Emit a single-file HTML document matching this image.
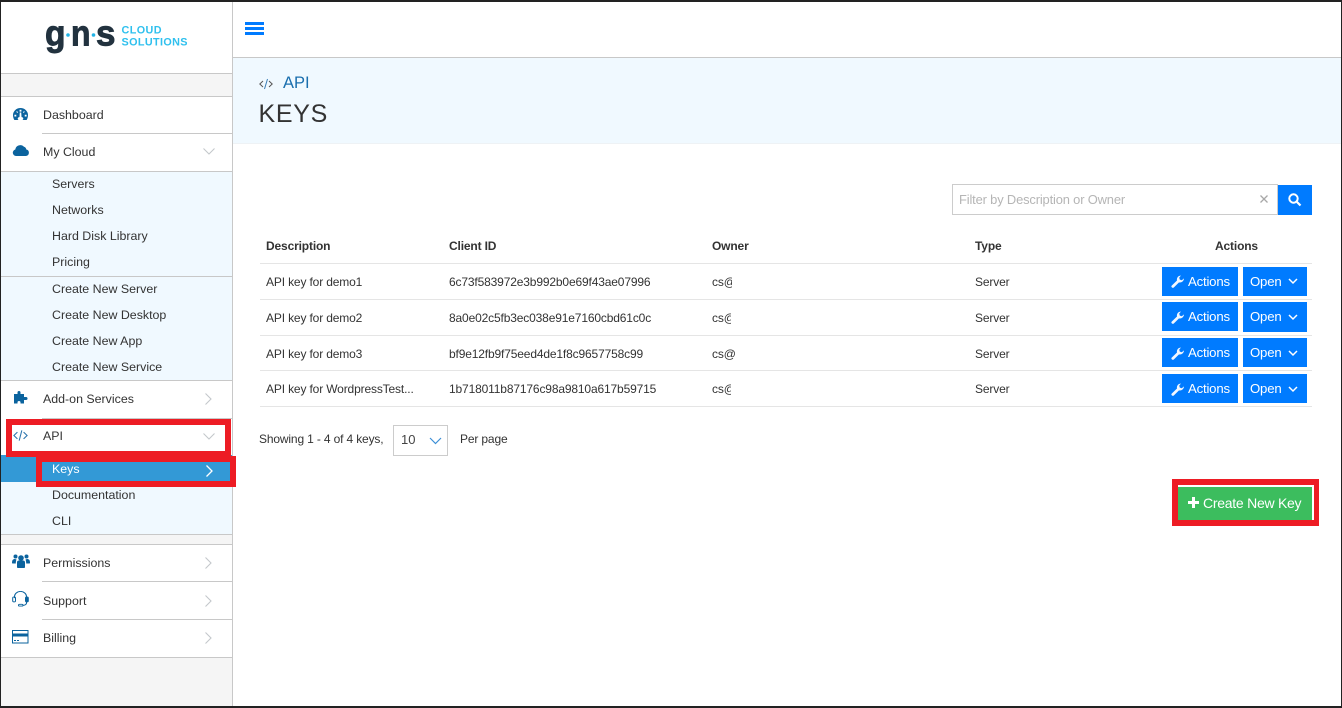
<!DOCTYPE html>
<html lang="en"><head><meta charset="utf-8"><title>API Keys</title>
<style>
html,body{margin:0;padding:0;width:1342px;height:708px;overflow:hidden;background:#fff;font-family:"Liberation Sans",Arial,sans-serif;color:#333}
div,span,svg{position:absolute;display:block}
.t{white-space:nowrap;font-size:12px;line-height:14px;letter-spacing:-.15px}
.s{white-space:nowrap;font-size:12.4px;line-height:16px;color:#333;margin-top:1px}
.l{background:#c8c8c8;height:1px}
.r{background:#e5e5e5;height:1px;left:260px;width:1052px}
.b{background:#007bff;color:#fff;font-size:13.2px;line-height:29px;white-space:nowrap;letter-spacing:-.2px}
.red{border:6px solid #ed1c24;box-sizing:border-box}
</style></head><body>
<div style="left:0;top:0;width:233px;height:708px;background:#fff"></div>
<div style="left:1px;top:74px;width:231px;height:22px;background:#f5f5f5"></div>
<div style="left:1px;top:535px;width:231px;height:9px;background:#f5f5f5"></div>
<div style="left:1px;top:658px;width:231px;height:48px;background:#f5f5f5"></div>
<div style="left:1px;top:172px;width:231px;height:208px;background:#f0f9ff"></div>
<div style="left:1px;top:457px;width:231px;height:77px;background:#f0f9ff"></div>
<div style="left:232px;top:0;width:1px;height:708px;background:#c8c8c8"></div>

<svg style="left:40px;top:20px" width="155" height="38" viewBox="0 0 155 38">
<g font-family="Liberation Sans" font-weight="700" font-size="36" fill="#22323f" stroke="#22323f" stroke-width=".9">
<text x="5" y="25.500" textLength="20.500" lengthAdjust="spacingAndGlyphs">g</text>
<text x="31" y="25.500" textLength="19.500" lengthAdjust="spacingAndGlyphs">n</text>
<text x="56" y="25.500" textLength="19.500" lengthAdjust="spacingAndGlyphs">s</text>
</g>
<circle cx="28" cy="15" r="1.800" fill="#22b3e6"/>
<circle cx="53.500" cy="15" r="1.800" fill="#22b3e6"/>
<text x="81.500" y="13.500" font-family="Liberation Sans" font-weight="700" font-size="10.800" fill="#2fc0ee" textLength="40" lengthAdjust="spacing">CLOUD</text>
<text x="81.500" y="25.500" font-family="Liberation Sans" font-weight="700" font-size="10.800" fill="#2fc0ee" textLength="66" lengthAdjust="spacing">SOLUTIONS</text>
</svg>

<div class="l" style="left:1px;top:73px;width:231px"></div>
<div class="l" style="left:1px;top:96px;width:231px"></div>
<div class="l" style="left:42px;top:133px;width:190px"></div>
<div class="l" style="left:1px;top:171px;width:231px"></div>
<div class="l" style="left:1px;top:276px;width:231px"></div>
<div class="l" style="left:1px;top:380px;width:231px"></div>
<div class="l" style="left:42px;top:418px;width:190px"></div>
<div class="l" style="left:1px;top:534px;width:231px"></div>
<div class="l" style="left:1px;top:544px;width:231px"></div>
<div class="l" style="left:42px;top:581px;width:190px"></div>
<div class="l" style="left:42px;top:619px;width:190px"></div>
<div class="l" style="left:1px;top:657px;width:231px"></div>

<div style="left:1px;top:455px;width:231px;height:27px;background:#3399d6"></div>

<div class="s" style="left:43px;top:106px">Dashboard</div>
<div class="s" style="left:43px;top:143px">My Cloud</div>
<div class="s" style="left:52px;top:175px">Servers</div>
<div class="s" style="left:52px;top:201px">Networks</div>
<div class="s" style="left:52px;top:227px">Hard Disk Library</div>
<div class="s" style="left:52px;top:253px">Pricing</div>
<div class="s" style="left:52px;top:280px">Create New Server</div>
<div class="s" style="left:52px;top:306px">Create New Desktop</div>
<div class="s" style="left:52px;top:332px">Create New App</div>
<div class="s" style="left:52px;top:358px">Create New Service</div>
<div class="s" style="left:43px;top:390px">Add-on Services</div>
<div class="s" style="left:43px;top:427px">API</div>
<div class="s" style="left:52px;top:460px;color:#fff">Keys</div>
<div class="s" style="left:52px;top:486px">Documentation</div>
<div class="s" style="left:52px;top:512px">CLI</div>
<div class="s" style="left:43px;top:554px">Permissions</div>
<div class="s" style="left:43px;top:592px">Support</div>
<div class="s" style="left:43px;top:629px">Billing</div>

<!-- sidebar icons -->
<svg style="left:13px;top:108px" width="15" height="12.500" viewBox="0 0 16 14" preserveAspectRatio="none"><path fill="#0b639e" fill-rule="evenodd" d="M8 0a8 8 0 0 0-8 8c0 2 .6 4 1.500 5.500h13C15.400 12 16 10 16 8a8 8 0 0 0-8-8zM7 2h2v2H7zM3.500 3.500l1.500.5.500 1.500-1.500-.5zM12.500 3.500l-.5 1.500-1.500.5.500-1.500zM1.500 7.500h2v2h-2zM12.500 7.500h2v2h-2zM7.200 5h1.600l.3 5.200a1.500 1.500 0 0 1 .4 3.300H6.500a1.500 1.500 0 0 1 .4-3.300z"/></svg>
<svg style="left:12px;top:143px" width="18" height="14" viewBox="0 0 18 14"><path fill="#0b639e" d="M4 13A3.300 3.300 0 0 1 3.300 6.500 5 5 0 0 1 12 3.800 3.400 3.400 0 0 1 14.300 6.500 3.300 3.300 0 0 1 14 13z"/></svg>
<svg style="left:13px;top:389.500px" width="16" height="15" viewBox="0 0 16 15"><path fill="#0b639e" d="M1 4h3.500V2.500C4.500 1.500 5 1 6 1s1.500.5 1.500 1.500V4H11v3h1c1 0 2.500-.2 2.500 1.500S13 10 12 10h-1v3.500H7.500v-1c0-1-.5-1.500-1.500-1.500s-1.500.5-1.500 1.500v1H1z"/></svg>
<svg style="left:13px;top:430px" width="15" height="11" viewBox="0 0 17 13" preserveAspectRatio="none" fill="none"><path stroke="#2a74ad" stroke-width="1.200" d="M5 2.500 1 6.500l4 4M12 2.500l4 4-4 4"/><path stroke="#2a74ad" stroke-width="1.200" d="M10 .5 7 12.500"/></svg>
<svg style="left:12px;top:554px" width="18" height="15" viewBox="0 0 18 15"><g fill="#0b639e"><circle cx="3.500" cy="2.500" r="2"/><circle cx="14.500" cy="2.500" r="2"/><circle cx="9" cy="4" r="2.800"/><path d="M0 9c0-3 1-4 3-4l1.500.5C4 6.500 3.800 8 3.800 9.500H1C.4 9.500 0 9.400 0 9zM18 9c0-3-1-4-3-4l-1.500.5c.5 1 .7 2.500.7 4H17c.6 0 1-.1 1-.5zM5 8.500c0-1.500.8-2 1.800-2h4.400c1 0 1.800.5 1.800 2V13c0 .7-.5 1-1 1H6c-.5 0-1-.3-1-1z"/></g></svg>
<svg style="left:12px;top:591px" width="17" height="16" viewBox="0 0 17 18" preserveAspectRatio="none" fill="none"><path stroke="#0b639e" stroke-width="1.100" d="M2.500 8V6.500a6 6 0 0 1 12 0V8M14.500 12v1.500c0 1.500-1.500 2.500-4 2.800"/><rect x=".7" y="6.700" width="2.800" height="5.600" rx="1.300" stroke="#0b639e"/><rect x="13.500" y="6.700" width="2.800" height="5.600" rx="1.300" stroke="#0b639e" fill="#0b639e"/><rect x="6.500" y="15" width="4.500" height="2" rx="1" stroke="#0b639e"/></svg>
<svg style="left:12px;top:630px" width="17" height="14" viewBox="0 0 17 14"><rect x=".5" y=".5" width="15.500" height="12.500" fill="none" stroke="#0b639e"/><rect x="0" y="3.500" width="16.500" height="3" fill="#0b639e"/><rect x="2" y="10" width="2" height="1" fill="#0b639e"/><rect x="5" y="10" width="2" height="1" fill="#0b639e"/></svg>

<!-- chevrons -->
<svg style="left:203px;top:148px" width="12" height="7" fill="none"><path stroke="#c4c8cc" stroke-width="1.100" d="M.5.500 6 6l5.500-5.500"/></svg>
<svg style="left:205px;top:393px" width="7" height="12" fill="none"><path stroke="#c4c8cc" stroke-width="1.100" d="M.5.500 6 6 .5 11.500"/></svg>
<svg style="left:203px;top:433px" width="12" height="7" fill="none"><path stroke="#c4c8cc" stroke-width="1.100" d="M.5.500 6 6l5.500-5.500"/></svg>
<svg style="left:206px;top:465px" width="7" height="12" fill="none"><path stroke="#fff" stroke-width="1.300" d="M.5.500 6 6 .5 11.500"/></svg>
<svg style="left:205px;top:557px" width="7" height="12" fill="none"><path stroke="#c4c8cc" stroke-width="1.100" d="M.5.500 6 6 .5 11.500"/></svg>
<svg style="left:205px;top:595px" width="7" height="12" fill="none"><path stroke="#c4c8cc" stroke-width="1.100" d="M.5.500 6 6 .5 11.500"/></svg>
<svg style="left:205px;top:632px" width="7" height="12" fill="none"><path stroke="#c4c8cc" stroke-width="1.100" d="M.5.500 6 6 .5 11.500"/></svg>

<!-- red boxes -->
<div class="red" style="left:6px;top:419px;width:225px;height:38px"></div>
<div class="red" style="left:36px;top:456px;width:200px;height:31px"></div>

<!-- topbar -->
<div style="left:245px;top:22px;width:19px;height:3px;background:#007bff"></div>
<div style="left:245px;top:27px;width:19px;height:3px;background:#007bff"></div>
<div style="left:245px;top:32px;width:19px;height:3px;background:#007bff"></div>
<div class="l" style="left:233px;top:57px;width:1108px"></div>

<!-- page header -->
<div style="left:233px;top:58px;width:1108px;height:85px;background:#f0f9ff"></div>
<div style="left:233px;top:143px;width:1108px;height:1px;background:#eef2f5"></div>
<svg style="left:259px;top:78px" width="14" height="12" viewBox="0 0 14 12" fill="none"><path stroke="#555" d="M4 3 .8 6 4 9M10 3l3.200 3L10 9"/><path stroke="#3a7db5" d="M8.500 1 5.500 11"/></svg>
<div style="left:283px;top:73px;font-size:16.500px;line-height:20px;color:#1a6fae;white-space:nowrap">API</div>
<div style="left:258.500px;top:99px;font-size:25px;line-height:30px;color:#333;letter-spacing:.7px;white-space:nowrap">KEYS</div>

<!-- search -->
<div style="left:952px;top:184px;width:326px;height:31px;border:1.500px solid #ccc;box-sizing:border-box;background:#fff"></div>
<div class="t" style="left:959px;top:193px;color:#b5b5b5;font-size:12.900px">Filter by Description or Owner</div>
<svg style="left:1260px;top:195px" width="8" height="8" fill="none"><path stroke="#a8a8a8" stroke-width="1.300" d="M.5.500l7 7M7.500.500l-7 7"/></svg>
<div style="left:1278px;top:185px;width:34px;height:30px;background:#007bff"></div>
<svg style="left:1288px;top:193px" width="14" height="14" fill="none"><circle cx="5.500" cy="5.500" r="4.200" stroke="#fff" stroke-width="2"/><path stroke="#fff" stroke-width="2.200" d="M8.500 8.500l4 4"/></svg>

<!-- table -->
<div class="t" style="left:266px;top:239px;font-weight:700">Description</div>
<div class="t" style="left:449px;top:239px;font-weight:700">Client ID</div>
<div class="t" style="left:712px;top:239px;font-weight:700">Owner</div>
<div class="t" style="left:975px;top:239px;font-weight:700">Type</div>
<div class="t" style="left:1215px;top:239px;font-weight:700">Actions</div>
<div class="r" style="top:263px"></div>
<div class="r" style="top:299px"></div>
<div class="r" style="top:335px"></div>
<div class="r" style="top:370px"></div>
<div class="r" style="top:406px"></div>

<div class="t" style="left:266px;top:275px">API key for demo1</div>
<div class="t" style="left:449px;top:275px">6c73f583972e3b992b0e69f43ae07996</div>
<div class="t" style="left:712px;top:275px;width:20px;overflow:hidden">cs@</div>
<div class="t" style="left:975px;top:275px">Server</div>
<div class="t" style="left:266px;top:311px">API key for demo2</div>
<div class="t" style="left:449px;top:311px">8a0e02c5fb3ec038e91e7160cbd61c0c</div>
<div class="t" style="left:712px;top:311px;width:19px;overflow:hidden">cs@</div>
<div class="t" style="left:975px;top:311px">Server</div>
<div class="t" style="left:266px;top:347px">API key for demo3</div>
<div class="t" style="left:449px;top:347px">bf9e12fb9f75eed4de1f8c9657758c99</div>
<div class="t" style="left:712px;top:347px">cs@</div>
<div class="t" style="left:975px;top:347px">Server</div>
<div class="t" style="left:266px;top:382px">API key for WordpressTest...</div>
<div class="t" style="left:449px;top:382px">1b718011b87176c98a9810a617b59715</div>
<div class="t" style="left:712px;top:382px;width:18.500px;overflow:hidden">cs@</div>
<div class="t" style="left:975px;top:382px">Server</div>

<!-- row buttons -->
<div class="b" style="left:1162px;top:267px;width:76px;height:29px"><span style="left:26px;top:0">Actions</span></div>
<div class="b" style="left:1243px;top:267px;width:64px;height:29px"><span style="left:7px;top:0">Open</span></div>
<div class="b" style="left:1162px;top:302px;width:76px;height:29px"><span style="left:26px;top:0">Actions</span></div>
<div class="b" style="left:1243px;top:302px;width:64px;height:30px"><span style="left:7px;top:0">Open</span></div>
<div class="b" style="left:1162px;top:338px;width:76px;height:29px"><span style="left:26px;top:0">Actions</span></div>
<div class="b" style="left:1243px;top:338px;width:64px;height:29px"><span style="left:7px;top:0">Open</span></div>
<div class="b" style="left:1162px;top:374px;width:76px;height:29px"><span style="left:26px;top:0">Actions</span></div>
<div class="b" style="left:1243px;top:374px;width:64px;height:29px"><span style="left:7px;top:0">Open</span></div>

<svg style="left:1171px;top:275px" width="13" height="13" viewBox="0 0 13 13"><path fill="#f2f7ff" d="M1 12.500c-.8-.6-.8-1.300-.3-1.900L6 5.500C5.600 3.500 6.500.8 10 .5L8.200 2.600l.6 2 2 .6L13 3.400c-.3 3.300-3 4.500-5 4L2.800 12.500c-.5.500-1.200.5-1.800 0z"/></svg>
<svg style="left:1171px;top:311px" width="13" height="13" viewBox="0 0 13 13"><path fill="#f2f7ff" d="M1 12.500c-.8-.6-.8-1.300-.3-1.900L6 5.500C5.600 3.500 6.500.8 10 .5L8.200 2.600l.6 2 2 .6L13 3.400c-.3 3.300-3 4.500-5 4L2.800 12.500c-.5.500-1.200.5-1.800 0z"/></svg>
<svg style="left:1171px;top:347px" width="13" height="13" viewBox="0 0 13 13"><path fill="#f2f7ff" d="M1 12.500c-.8-.6-.8-1.300-.3-1.900L6 5.500C5.600 3.500 6.500.8 10 .5L8.200 2.600l.6 2 2 .6L13 3.400c-.3 3.300-3 4.500-5 4L2.800 12.500c-.5.500-1.200.5-1.800 0z"/></svg>
<svg style="left:1171px;top:383px" width="13" height="13" viewBox="0 0 13 13"><path fill="#f2f7ff" d="M1 12.500c-.8-.6-.8-1.300-.3-1.900L6 5.500C5.600 3.500 6.500.8 10 .5L8.200 2.600l.6 2 2 .6L13 3.400c-.3 3.300-3 4.500-5 4L2.800 12.500c-.5.500-1.200.5-1.800 0z"/></svg>
<svg style="left:1288px;top:278px" width="10" height="7" fill="none"><path stroke="#fff" stroke-width="1.500" d="M1 1l4 4 4-4"/></svg>
<svg style="left:1288px;top:314px" width="10" height="7" fill="none"><path stroke="#fff" stroke-width="1.500" d="M1 1l4 4 4-4"/></svg>
<svg style="left:1288px;top:350px" width="10" height="7" fill="none"><path stroke="#fff" stroke-width="1.500" d="M1 1l4 4 4-4"/></svg>
<svg style="left:1288px;top:386px" width="10" height="7" fill="none"><path stroke="#fff" stroke-width="1.500" d="M1 1l4 4 4-4"/></svg>

<!-- pagination -->
<div class="t" style="left:259px;top:432px">Showing 1 - 4 of 4 keys,</div>
<div style="left:393px;top:425px;width:55px;height:31px;border:1px solid #ccc;box-sizing:border-box"></div>
<div style="left:401px;top:432px;font-size:13px;line-height:15px;color:#444">10</div>
<svg style="left:429px;top:437px" width="13" height="8" fill="none"><path stroke="#3d8fd6" stroke-width="1.200" d="M1 1l5.500 5.500L12 1"/></svg>
<div class="t" style="left:460px;top:432px">Per page</div>

<!-- create button -->
<div style="left:1172px;top:479px;width:147px;height:47px;background:#ed1c24"></div>
<div style="left:1178px;top:485px;width:136px;height:35px;background:#fff"></div>
<div style="left:1178px;top:487px;width:134px;height:33px;background:#3cbd5e"></div>
<svg style="left:1188px;top:497px" width="11" height="11"><path fill="#fff" d="M4 0h3v4h4v3H7v4H4V7H0V4h4z"/></svg>
<div style="left:1203px;top:495px;font-size:14px;line-height:16px;color:#fff;white-space:nowrap;letter-spacing:-.26px">Create New Key</div>

<!-- screenshot black frame -->
<div style="left:0;top:0;width:1342px;height:2px;background:#222"></div>
<div style="left:0;top:0;width:1px;height:708px;background:#222"></div>
<div style="left:1341px;top:0;width:1px;height:708px;background:#222"></div>
<div style="left:0;top:706px;width:1342px;height:2px;background:#222"></div>
</body></html>
